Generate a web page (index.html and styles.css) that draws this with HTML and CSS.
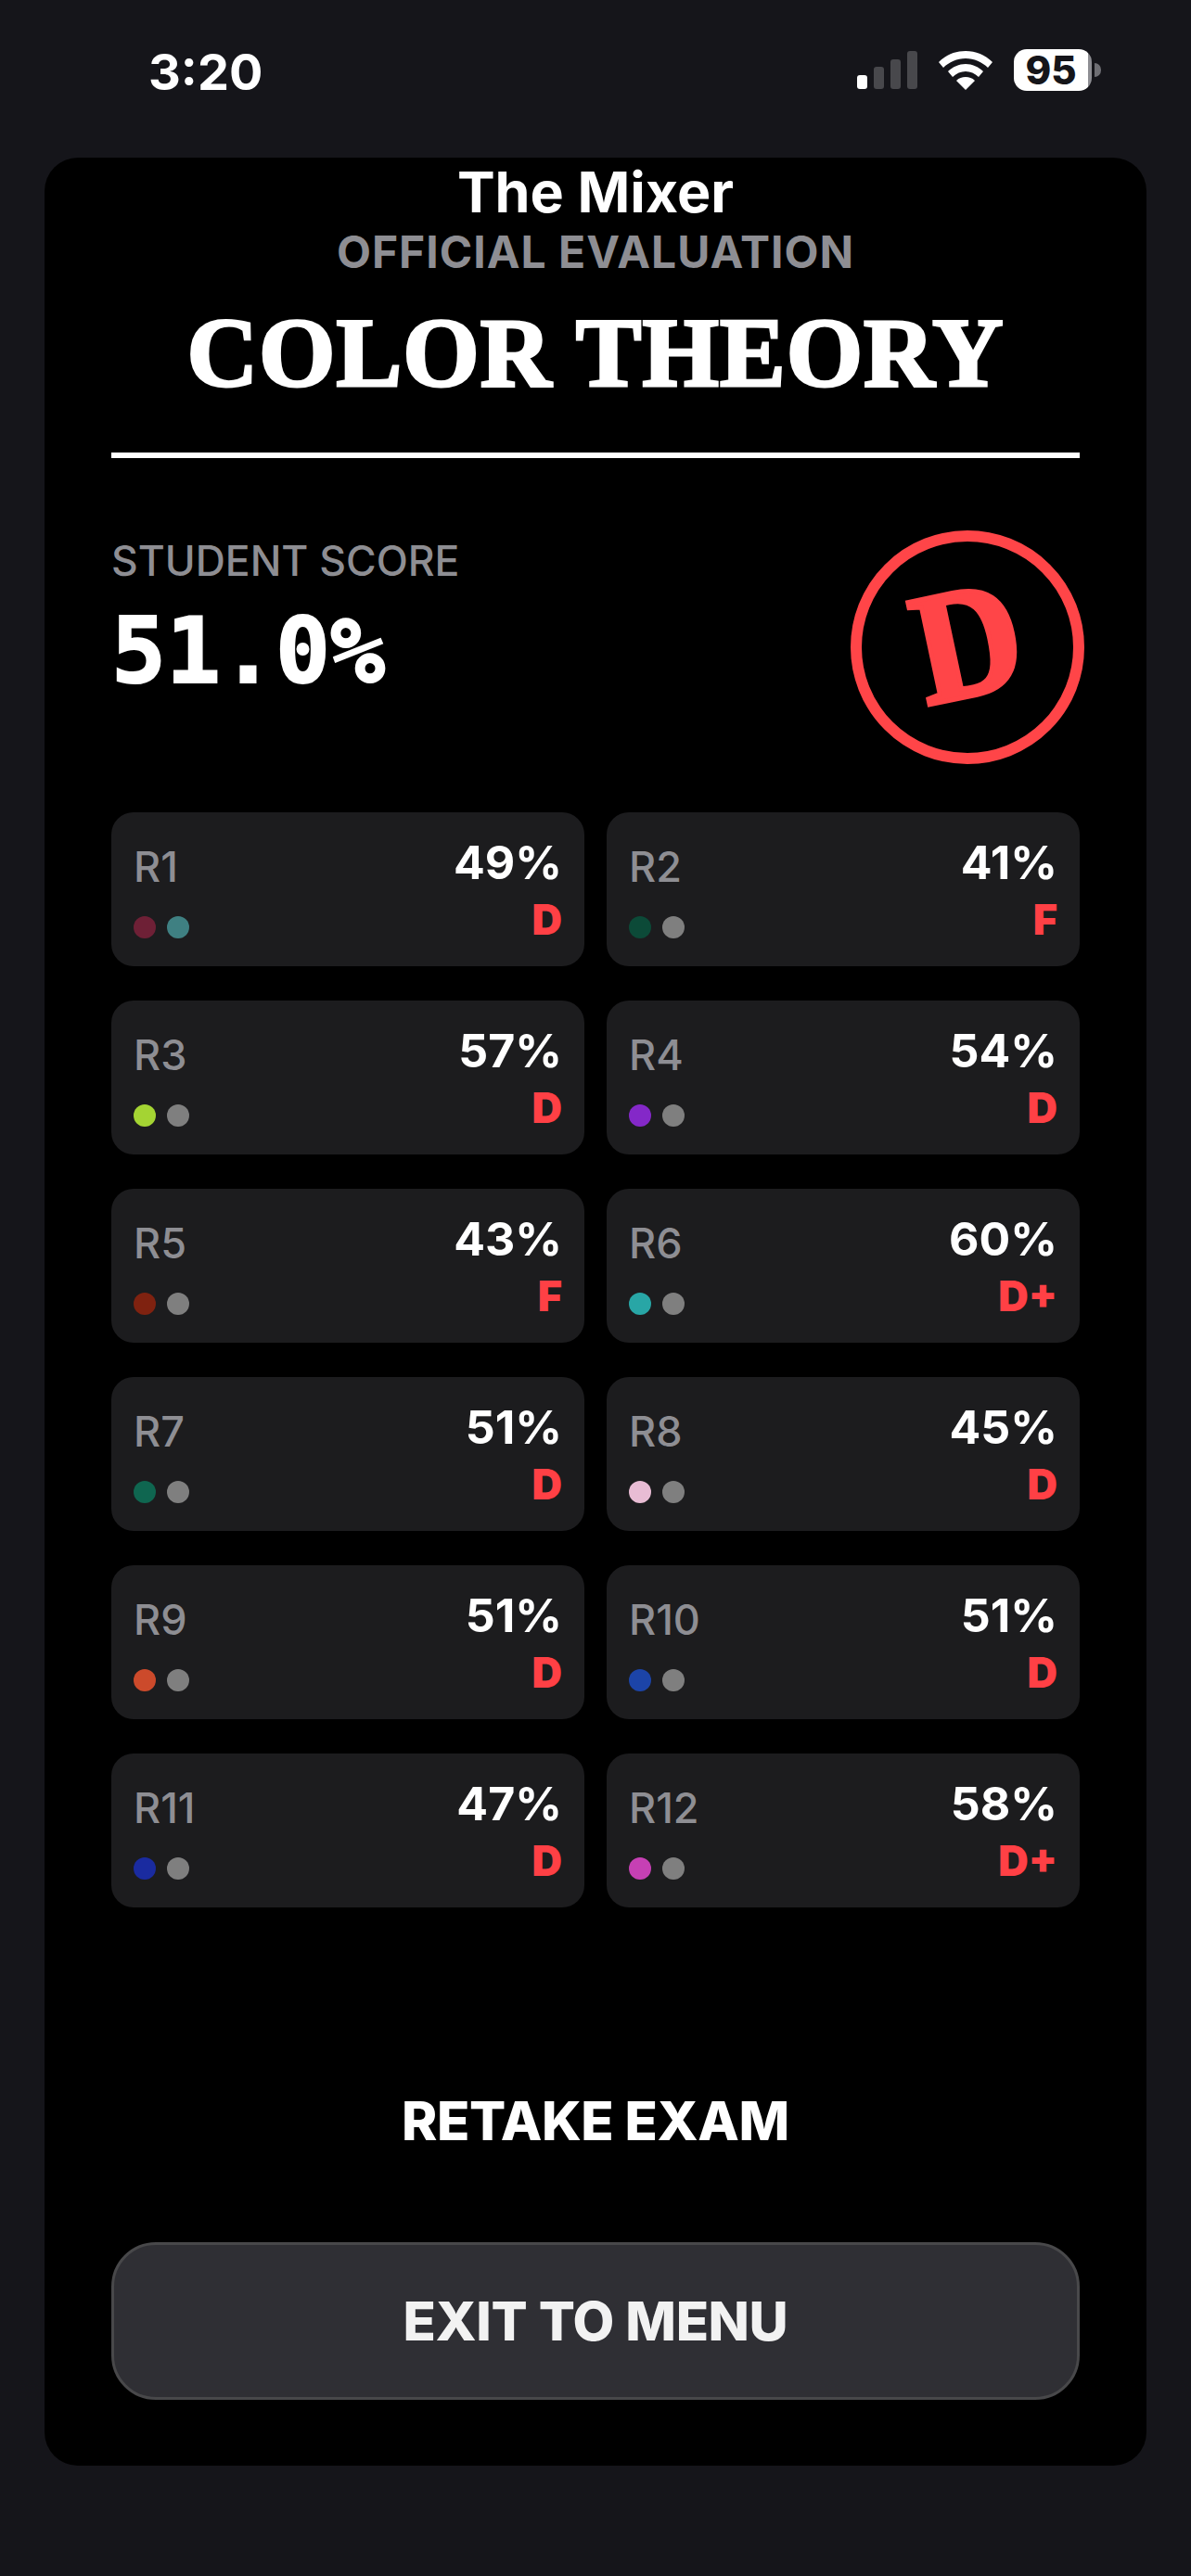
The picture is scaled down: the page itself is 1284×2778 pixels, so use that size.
FILE: index.html
```html
<!DOCTYPE html>
<html lang="en">
<head>
<meta charset="utf-8">
<title>The Mixer</title>
<link rel="stylesheet" href="styles.css">
</head>
<body>
<header class="status">
  <span class="time">3:20</span>
  <div class="status-icons">
    <div class="signal"><i class="on s1"></i><i class="s2"></i><i class="s3"></i><i class="s4"></i></div>
    <svg class="wifi" width="58" height="42" viewBox="0 0 58 42">
      <path fill="#fff" d="M29 0C18 0 8 4 0 12l5 6C11 12 20 8 29 8s18 4 24 10l5-6C50 4 40 0 29 0z"/>
      <path fill="#fff" d="M29 14c-7 0-14 3-19 8l5 6c4-4 9-6 14-6s10 2 14 6l5-6c-5-5-12-8-19-8z"/>
      <path fill="#fff" d="M29 28c-4 0-7 1-10 4l10 10 10-10c-3-3-6-4-10-4z"/>
    </svg>
    <div class="battery"><div class="battery-body">95</div><div class="battery-cap"></div></div>
  </div>
</header>
<main class="sheet">
  <h1 class="brand">The Mixer</h1>
  <p class="kicker">OFFICIAL EVALUATION</p>
  <h2 class="title">COLOR THEORY</h2>
  <hr class="rule">
  <section class="summary">
    <div>
      <div class="summary-label">STUDENT SCORE</div>
      <div class="summary-value">51.0%</div>
    </div>
    <div class="stamp"><span class="stamp-letter">D</span></div>
  </section>
  <section class="grid">
    <article class="round"><div class="round-left"><span class="round-name">R1</span><div class="dots"><i class="dot" style="background:#6e2036"></i><i class="dot" style="background:#3f8082"></i></div></div><div class="round-right"><span class="round-pct">49%</span><span class="round-grade">D</span></div></article>
    <article class="round"><div class="round-left"><span class="round-name">R2</span><div class="dots"><i class="dot" style="background:#0c4a38"></i><i class="dot" style="background:#7f7f7f"></i></div></div><div class="round-right"><span class="round-pct">41%</span><span class="round-grade">F</span></div></article>
    <article class="round"><div class="round-left"><span class="round-name">R3</span><div class="dots"><i class="dot" style="background:#a4d433"></i><i class="dot" style="background:#7f7f7f"></i></div></div><div class="round-right"><span class="round-pct">57%</span><span class="round-grade">D</span></div></article>
    <article class="round"><div class="round-left"><span class="round-name">R4</span><div class="dots"><i class="dot" style="background:#8428c8"></i><i class="dot" style="background:#7f7f7f"></i></div></div><div class="round-right"><span class="round-pct">54%</span><span class="round-grade">D</span></div></article>
    <article class="round"><div class="round-left"><span class="round-name">R5</span><div class="dots"><i class="dot" style="background:#7f2210"></i><i class="dot" style="background:#7f7f7f"></i></div></div><div class="round-right"><span class="round-pct">43%</span><span class="round-grade">F</span></div></article>
    <article class="round"><div class="round-left"><span class="round-name">R6</span><div class="dots"><i class="dot" style="background:#28a6a6"></i><i class="dot" style="background:#7f7f7f"></i></div></div><div class="round-right"><span class="round-pct">60%</span><span class="round-grade">D+</span></div></article>
    <article class="round"><div class="round-left"><span class="round-name">R7</span><div class="dots"><i class="dot" style="background:#0f6650"></i><i class="dot" style="background:#7f7f7f"></i></div></div><div class="round-right"><span class="round-pct">51%</span><span class="round-grade">D</span></div></article>
    <article class="round"><div class="round-left"><span class="round-name">R8</span><div class="dots"><i class="dot" style="background:#e8bcd4"></i><i class="dot" style="background:#7f7f7f"></i></div></div><div class="round-right"><span class="round-pct">45%</span><span class="round-grade">D</span></div></article>
    <article class="round"><div class="round-left"><span class="round-name">R9</span><div class="dots"><i class="dot" style="background:#cc4a2b"></i><i class="dot" style="background:#7f7f7f"></i></div></div><div class="round-right"><span class="round-pct">51%</span><span class="round-grade">D</span></div></article>
    <article class="round"><div class="round-left"><span class="round-name">R10</span><div class="dots"><i class="dot" style="background:#1c44a8"></i><i class="dot" style="background:#7f7f7f"></i></div></div><div class="round-right"><span class="round-pct">51%</span><span class="round-grade">D</span></div></article>
    <article class="round"><div class="round-left"><span class="round-name">R11</span><div class="dots"><i class="dot" style="background:#1a2ba0"></i><i class="dot" style="background:#7f7f7f"></i></div></div><div class="round-right"><span class="round-pct">47%</span><span class="round-grade">D</span></div></article>
    <article class="round"><div class="round-left"><span class="round-name">R12</span><div class="dots"><i class="dot" style="background:#c640b4"></i><i class="dot" style="background:#7f7f7f"></i></div></div><div class="round-right"><span class="round-pct">58%</span><span class="round-grade">D+</span></div></article>
  </section>
  <button class="btn-retake">RETAKE EXAM</button>
  <button class="btn-exit">EXIT TO MENU</button>
</main>
</body>
</html>
```
FILE: styles.css
```css
* { box-sizing: border-box; }
html, body { margin: 0; height: 100%; }
body {
  width: 1284px;
  height: 2778px;
  background: #15151a;
  color: #fff;
  font-family: Inter, "Liberation Sans", sans-serif;
  overflow: hidden;
}
.status {
  height: 170px;
  display: flex;
  justify-content: space-between;
  align-items: flex-start;
  padding: 47px 97px 0 160px;
}
.time { font-size: 54px; font-weight: 700; line-height: 58px; padding-top: 2px; }
.status-icons { display: flex; align-items: center; gap: 23px; padding-top: 6px; }
.signal { display: flex; align-items: flex-end; gap: 7px; height: 41px; }
.signal i { display: block; width: 11px; border-radius: 3px; background: #48484c; }
.signal .on { background: #fff; }
.s1 { height: 15px; }
.s2 { height: 24px; }
.s3 { height: 32px; }
.s4 { height: 41px; }
.wifi { display: block; }
.battery { display: flex; align-items: center; gap: 3px; }
.battery-body {
  width: 84px;
  height: 45px;
  border-radius: 14px;
  background: linear-gradient(90deg, #fff 95%, #8e8e93 95%);
  color: #15151a;
  font-size: 42px;
  font-weight: 800;
  line-height: 45px;
  text-align: center;
  padding-right: 4px;
}
.battery-cap {
  width: 7px;
  height: 15px;
  border-radius: 0 8px 8px 0;
  background: #6e6e73;
}
.sheet {
  width: 1188px;
  height: 2489px;
  margin: 0 48px;
  padding: 2px 72px 0;
  background: #000;
  border-radius: 36px;
  display: flex;
  flex-direction: column;
}
.brand {
  margin: 0;
  font-size: 61px;
  font-weight: 700;
  line-height: 70px;
  text-align: center;
}
.kicker {
  margin: 5px 0 0;
  font-size: 48px;
  font-weight: 700;
  line-height: 50px;
  letter-spacing: 1px;
  color: #8e8e93;
  text-align: center;
}
.title {
  margin: 25px 0 0;
  font-family: "Liberation Serif", serif;
  font-size: 106px;
  font-weight: 700;
  line-height: 118px;
  text-align: center;
  letter-spacing: 1px;
  -webkit-text-stroke: 3px #fff;
}
.rule { margin: 48px 0 0; height: 6px; border: 0; background: #fff; }
.summary {
  margin-top: 76px;
  height: 254px;
  display: flex;
  justify-content: space-between;
  align-items: flex-start;
}
.summary-label { font-size: 44.5px; font-weight: 500; line-height: 50px; color: #8e8e93; margin-top: 10px; }
.summary-value {
  font-family: "DejaVu Sans Mono", monospace;
  font-size: 98px;
  font-weight: 700;
  line-height: 100px;
  margin-top: 22px;
  -webkit-text-stroke: 2px #fff;
}
.stamp {
  width: 252px;
  height: 252px;
  margin: 2px -5px 0 0;
  border: 12px solid #ff4548;
  border-radius: 50%;
  display: flex;
  align-items: center;
  justify-content: center;
}
.stamp-letter {
  font-family: "Liberation Serif", serif;
  font-size: 172px;
  font-weight: 700;
  line-height: 1;
  color: #ff4548;
  transform: translateY(-6px) rotate(-12deg) scaleX(0.92);
  -webkit-text-stroke: 5px #ff4548;
}
.grid {
  margin-top: 52px;
  display: grid;
  grid-template-columns: 510px 510px;
  grid-auto-rows: 166px;
  column-gap: 24px;
  row-gap: 37px;
}
.round {
  background: #1c1c1e;
  border-radius: 24px;
  padding: 30px 24px 28px 24px;
  display: flex;
  justify-content: space-between;
}
.round-left, .round-right { display: flex; flex-direction: column; justify-content: space-between; }
.round-right { align-items: flex-end; }
.round-name { font-size: 45px; font-weight: 500; line-height: 50px; color: #8e8e93; padding-top: 4px; }
.dots { display: flex; gap: 12px; margin-bottom: 2px; }
.dot { display: block; width: 24px; height: 24px; border-radius: 50%; }
.round-pct { font-size: 50px; font-weight: 700; line-height: 50px; margin-top: -1px; }
.round-grade { font-size: 45px; font-weight: 900; line-height: 50px; color: #ff4045; margin-bottom: -3px; }
.btn-retake, .btn-exit {
  font-family: Inter, "Liberation Sans", sans-serif;
  font-size: 58px;
  font-weight: 800;
  border: 0;
  padding: 0;
  width: 100%;
  text-align: center;
  letter-spacing: -0.4px;
}
.btn-retake {
  margin-top: 195px;
  height: 70px;
  background: none;
  color: #fff;
}
.btn-exit {
  margin-top: 96px;
  height: 170px;
  border: 3px solid #48484a;
  border-radius: 48px;
  background: #2f2f34;
  color: #f2f2f2;
}
```
